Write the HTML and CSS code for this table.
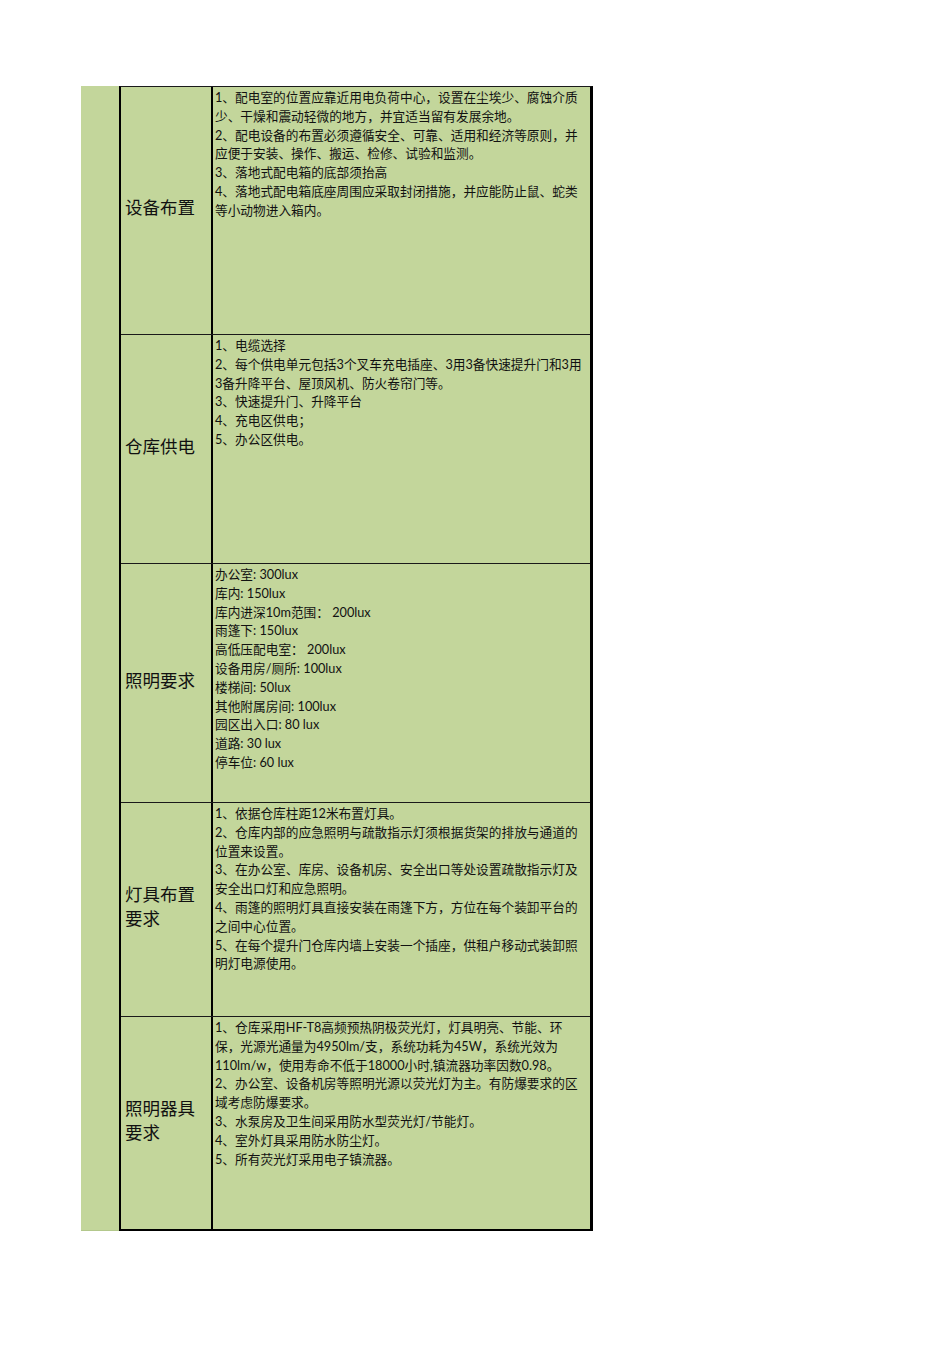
FILE: index.html
```html
<!DOCTYPE html>
<html lang="zh-CN">
<head>
<meta charset="utf-8">
<title>仓库电气要求</title>
<link rel="stylesheet" href="styles.css">
</head>
<body>
<div class="sheet">
  <div class="side"></div>
  <div class="table">
    <div class="row r1">
      <div class="label">设备布置</div>
      <div class="content">
        <div>1、配电室的位置应靠近用电负荷中心，设置在尘埃少、腐蚀介质<br>少、干燥和震动轻微的地方，并宜适当留有发展余地。</div>
        <div>2、配电设备的布置必须遵循安全、可靠、适用和经济等原则，并<br>应便于安装、操作、搬运、检修、试验和监测。</div>
        <div>3、落地式配电箱的底部须抬高</div>
        <div>4、落地式配电箱底座周围应采取封闭措施，并应能防止鼠、蛇类<br>等小动物进入箱内。</div>
      </div>
    </div>
    <div class="row r2">
      <div class="label">仓库供电</div>
      <div class="content">
        <div>1、电缆选择</div>
        <div>2、每个供电单元包括3个叉车充电插座、3用3备快速提升门和3用<br>3备升降平台、屋顶风机、防火卷帘门等。</div>
        <div>3、快速提升门、升降平台</div>
        <div>4、充电区供电；</div>
        <div>5、办公区供电。</div>
      </div>
    </div>
    <div class="row r3">
      <div class="label">照明要求</div>
      <div class="content">
        <div>办公室: 300lux</div>
        <div>库内: 150lux</div>
        <div>库内进深10m范围： 200lux</div>
        <div>雨篷下: 150lux</div>
        <div>高低压配电室： 200lux</div>
        <div>设备用房/厕所: 100lux</div>
        <div>楼梯间: 50lux</div>
        <div>其他附属房间: 100lux</div>
        <div>园区出入口: 80 lux</div>
        <div>道路: 30 lux</div>
        <div>停车位: 60 lux</div>
      </div>
    </div>
    <div class="row r4">
      <div class="label">灯具布置<br>要求</div>
      <div class="content">
        <div>1、依据仓库柱距12米布置灯具。</div>
        <div>2、仓库内部的应急照明与疏散指示灯须根据货架的排放与通道的<br>位置来设置。</div>
        <div>3、在办公室、库房、设备机房、安全出口等处设置疏散指示灯及<br>安全出口灯和应急照明。</div>
        <div>4、雨篷的照明灯具直接安装在雨篷下方，方位在每个装卸平台的<br>之间中心位置。</div>
        <div>5、在每个提升门仓库内墙上安装一个插座，供租户移动式装卸照<br>明灯电源使用。</div>
      </div>
    </div>
    <div class="row r5">
      <div class="label">照明器具<br>要求</div>
      <div class="content">
        <div>1、仓库采用HF-T8高频预热阴极荧光灯，灯具明亮、节能、环<br>保，光源光通量为4950lm/支，系统功耗为45W，系统光效为<br>110lm/w，使用寿命不低于18000小时,镇流器功率因数0.98。</div>
        <div>2、办公室、设备机房等照明光源以荧光灯为主。有防爆要求的区<br>域考虑防爆要求。</div>
        <div>3、水泵房及卫生间采用防水型荧光灯/节能灯。</div>
        <div>4、室外灯具采用防水防尘灯。</div>
        <div>5、所有荧光灯采用电子镇流器。</div>
      </div>
    </div>
  </div>
</div>
</body>
</html>
```
FILE: styles.css
```css
html, body {
  margin: 0;
  padding: 0;
  background: #ffffff;
}

body {
  font-family: "Lato", "Noto Sans CJK SC", sans-serif;
  color: #111;
}

.sheet {
  display: flex;
  margin: 86px 0 0 81px;
  width: 512px;
}

.side {
  width: 38px;
  background: #c3d69b;
  border-bottom: 1px solid #b3c88c;
  box-sizing: border-box;
}

.table {
  width: 474px;
  box-sizing: border-box;
  background: #c3d69b;
  border-top: 1px solid #1a1a1a;
  border-left: 2px solid #000;
  border-right: 3px solid #000;
  border-bottom: 2px solid #000;
}

.row {
  display: grid;
  grid-template-columns: 92px 1fr;
  box-sizing: border-box;
  border-bottom: 1px solid #1a1a1a;
}

.row.r5 {
  border-bottom: none;
}

.r1 { height: 248px; }
.r2 { height: 229px; }
.r3 { height: 239px; }
.r4 { height: 214px; }
.r5 { height: 212px; }

.label {
  display: flex;
  align-items: center;
  padding: 0 0 5px 4px;
  border-right: 2px solid #000;
  font-size: 17.5px;
  line-height: 24px;
  color: #111;
}

.content {
  padding: 1px 0 0 2px;
  font-size: 12.7px;
  line-height: 18.8px;
  white-space: nowrap;
  color: #111;
}
```
